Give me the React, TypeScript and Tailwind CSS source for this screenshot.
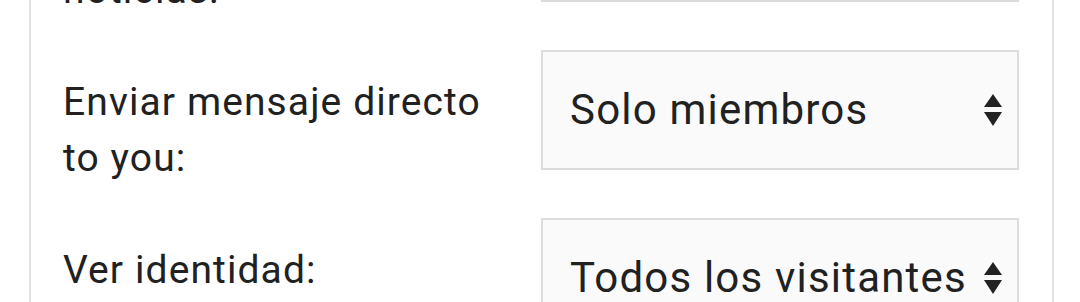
const rows = [
  { label: ['Recibir', 'noticias:'], value: 'Todos los visitantes' },
  { label: ['Enviar mensaje directo', 'to you:'], value: 'Solo miembros' },
  { label: ['Ver identidad:'], value: 'Todos los visitantes' },
]

function Arrows() {
  return (
    <svg width="20" height="34" viewBox="0 0 20 34" className="shrink-0">
      <path d="M10 1 L19 14 L1 14 Z" fill="#222" />
      <path d="M1 19 L19 19 L10 33 Z" fill="#222" />
    </svg>
  )
}

export default function App() {
  return (
    <div
      className="h-[302px] overflow-hidden bg-white text-[#212121]"
      style={{ fontFamily: 'Roboto, "Noto Sans", sans-serif' }}
    >
      <div className="ml-[29px] mr-[26px] border-x-2 border-[#e2e2e2] pl-[32px] pr-[32px] -mt-[118px] flex flex-col gap-[32px]">
        {rows.map((row, i) => (
          <div key={i} className="grid grid-cols-[478px_478px] items-start">
            <div className="pt-[24px] pr-4 text-[39px] leading-[56px] tracking-[1.1px]">
              {row.label.map((l, j) => (
                <div key={j} className="whitespace-nowrap">{l}</div>
              ))}
            </div>
            <div className="h-[120px] border-2 border-[#dcdcdc] bg-[#fafafa] flex items-center justify-between pl-[27px] pr-[14px]">
              <span className="text-[42px] tracking-[1.2px] pb-[2px] whitespace-nowrap">{row.value}</span>
              <Arrows />
            </div>
          </div>
        ))}
      </div>
    </div>
  )
}
